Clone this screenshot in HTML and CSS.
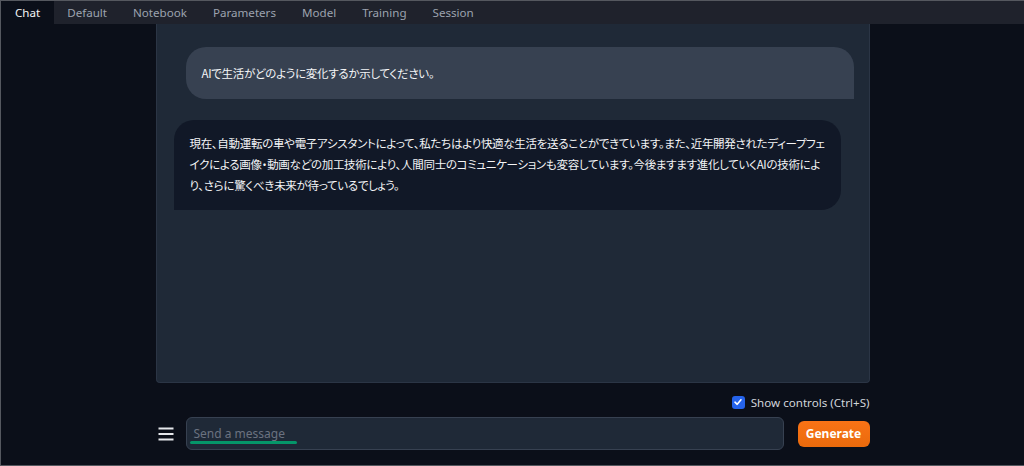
FILE: index.html
```html
<!DOCTYPE html>
<html lang="ja">
<head>
  <meta charset="UTF-8" />
  <meta name="viewport" content="width=device-width, initial-scale=1.0"/>
  <title>Chat</title>
  <link rel="stylesheet" href="styles.css">
</head>
<body>
  <div class="tabs">
    <div class="tab active">Chat</div>
    <div class="tab">Default</div>
    <div class="tab">Notebook</div>
    <div class="tab">Parameters</div>
    <div class="tab">Model</div>
    <div class="tab">Training</div>
    <div class="tab">Session</div>
  </div>

  <div class="main">
    <div class="chat">
      <div class="msg user">AIで生活がどのように変化するか示してください。</div>
      <div class="msg bot">現在、自動運転の車や電子アシスタントによって、私たちはより快適な生活を送ることができています。また、近年開発されたディープフェイクによる画像・動画などの加工技術により、人間同士のコミュニケーションも変容しています。今後ますます進化していくAIの技術により、さらに驚くべき未来が待っているでしょう。</div>
    </div>

    <div class="controls">
      <label class="check"><span class="box"><svg width="10" height="10" viewBox="0 0 10 10"><path d="M2 5.2 L4.2 7.3 L8 2.8" fill="none" stroke="#fff" stroke-width="1.6" stroke-linecap="round" stroke-linejoin="round"/></svg></span>Show controls (Ctrl+S)</label>
    </div>

    <div class="input-row">
      <div class="menu"><svg width="16" height="14" viewBox="0 0 16 14"><path d="M0.5 1.5 H15.5 M0.5 7 H15.5 M0.5 12.5 H15.5" stroke="#e5e7eb" stroke-width="1.8"/></svg></div>
      <div class="input"><span class="placeholder">Send a message</span><span class="squiggle"></span></div>
      <button class="generate">Generate</button>
    </div>
  </div>
</body>
</html>
```

FILE: styles.css
```css
body {
  margin: 0;
  box-sizing: border-box;
  height: 466px;
  background: #0b0f19;
  border: 1px solid #55585f;
  border-right: none;
  font-family: "Noto Sans", "Noto Sans CJK JP", sans-serif;
  color: #e5e7eb;
  display: flex;
  flex-direction: column;
  overflow: hidden;
}

.tabs {
  display: flex;
  height: 23px;
  background: #1f222c;
  flex-shrink: 0;
}

.tab {
  padding: 0 13px;
  font-size: 11.6px;
  line-height: 23px;
  color: #9ca3af;
}

.tab.active {
  padding: 0 14px;
  background: #0b0f19;
  color: #f3f4f6;
}

.main {
  width: 714px;
  margin: 0 auto;
  display: flex;
  flex-direction: column;
}

.chat {
  height: 359px;
  box-sizing: border-box;
  background: #1f2937;
  border: 1px solid #2b3545;
  border-top: none;
  border-radius: 0 0 4px 4px;
  padding: 23px 15px 0 17px;
  display: flex;
  flex-direction: column;
  gap: 21px;
}

.msg {
  font-family: "Noto Sans CJK JP", sans-serif;
  font-feature-settings: "palt";
  font-size: 11.5px;
  letter-spacing: -0.3px;
  color: #f3f4f6;
}

.msg.user {
  margin-left: 12px;
  background: #374151;
  border-radius: 20px 20px 0 20px;
  padding: 16px 16px;
  line-height: 20px;
}

.msg.bot {
  margin-right: 13px;
  background: #111827;
  border-radius: 20px 20px 20px 0;
  padding: 13px 8px 14px 16px;
  line-height: 21px;
}

.controls {
  display: flex;
  justify-content: flex-end;
  padding-top: 12px;
  height: 22px;
}

.check {
  display: flex;
  align-items: center;
  gap: 6px;
  font-size: 11.6px;
  color: #d1d5db;
  height: 14px;
}

.box {
  width: 13px;
  height: 13px;
  border-radius: 3px;
  background: #2563eb;
  display: flex;
  align-items: center;
  justify-content: center;
}

.input-row {
  display: flex;
  align-items: center;
}

.menu {
  width: 30px;
  padding-left: 2px;
  box-sizing: border-box;
  display: flex;
}

.input {
  position: relative;
  width: 598px;
  height: 33px;
  box-sizing: border-box;
  background: #1f2937;
  border: 1px solid #374151;
  border-radius: 6px;
  padding: 6px 7px;
  font-size: 12px;
}

.placeholder {
  color: #6b7280;
  line-height: 20px;
}

.squiggle {
  position: absolute;
  left: 3px;
  top: 23px;
  width: 107px;
  height: 3px;
  border-radius: 2px;
  background: #059669;
}

.generate {
  margin-left: 14px;
  width: 72px;
  height: 26px;
  border: none;
  border-radius: 6px;
  background: linear-gradient(#f97316, #ea6a0c);
  color: #fff;
  font-family: "Noto Sans", sans-serif;
  font-weight: bold;
  font-size: 12px;
  padding: 0;
}
```
